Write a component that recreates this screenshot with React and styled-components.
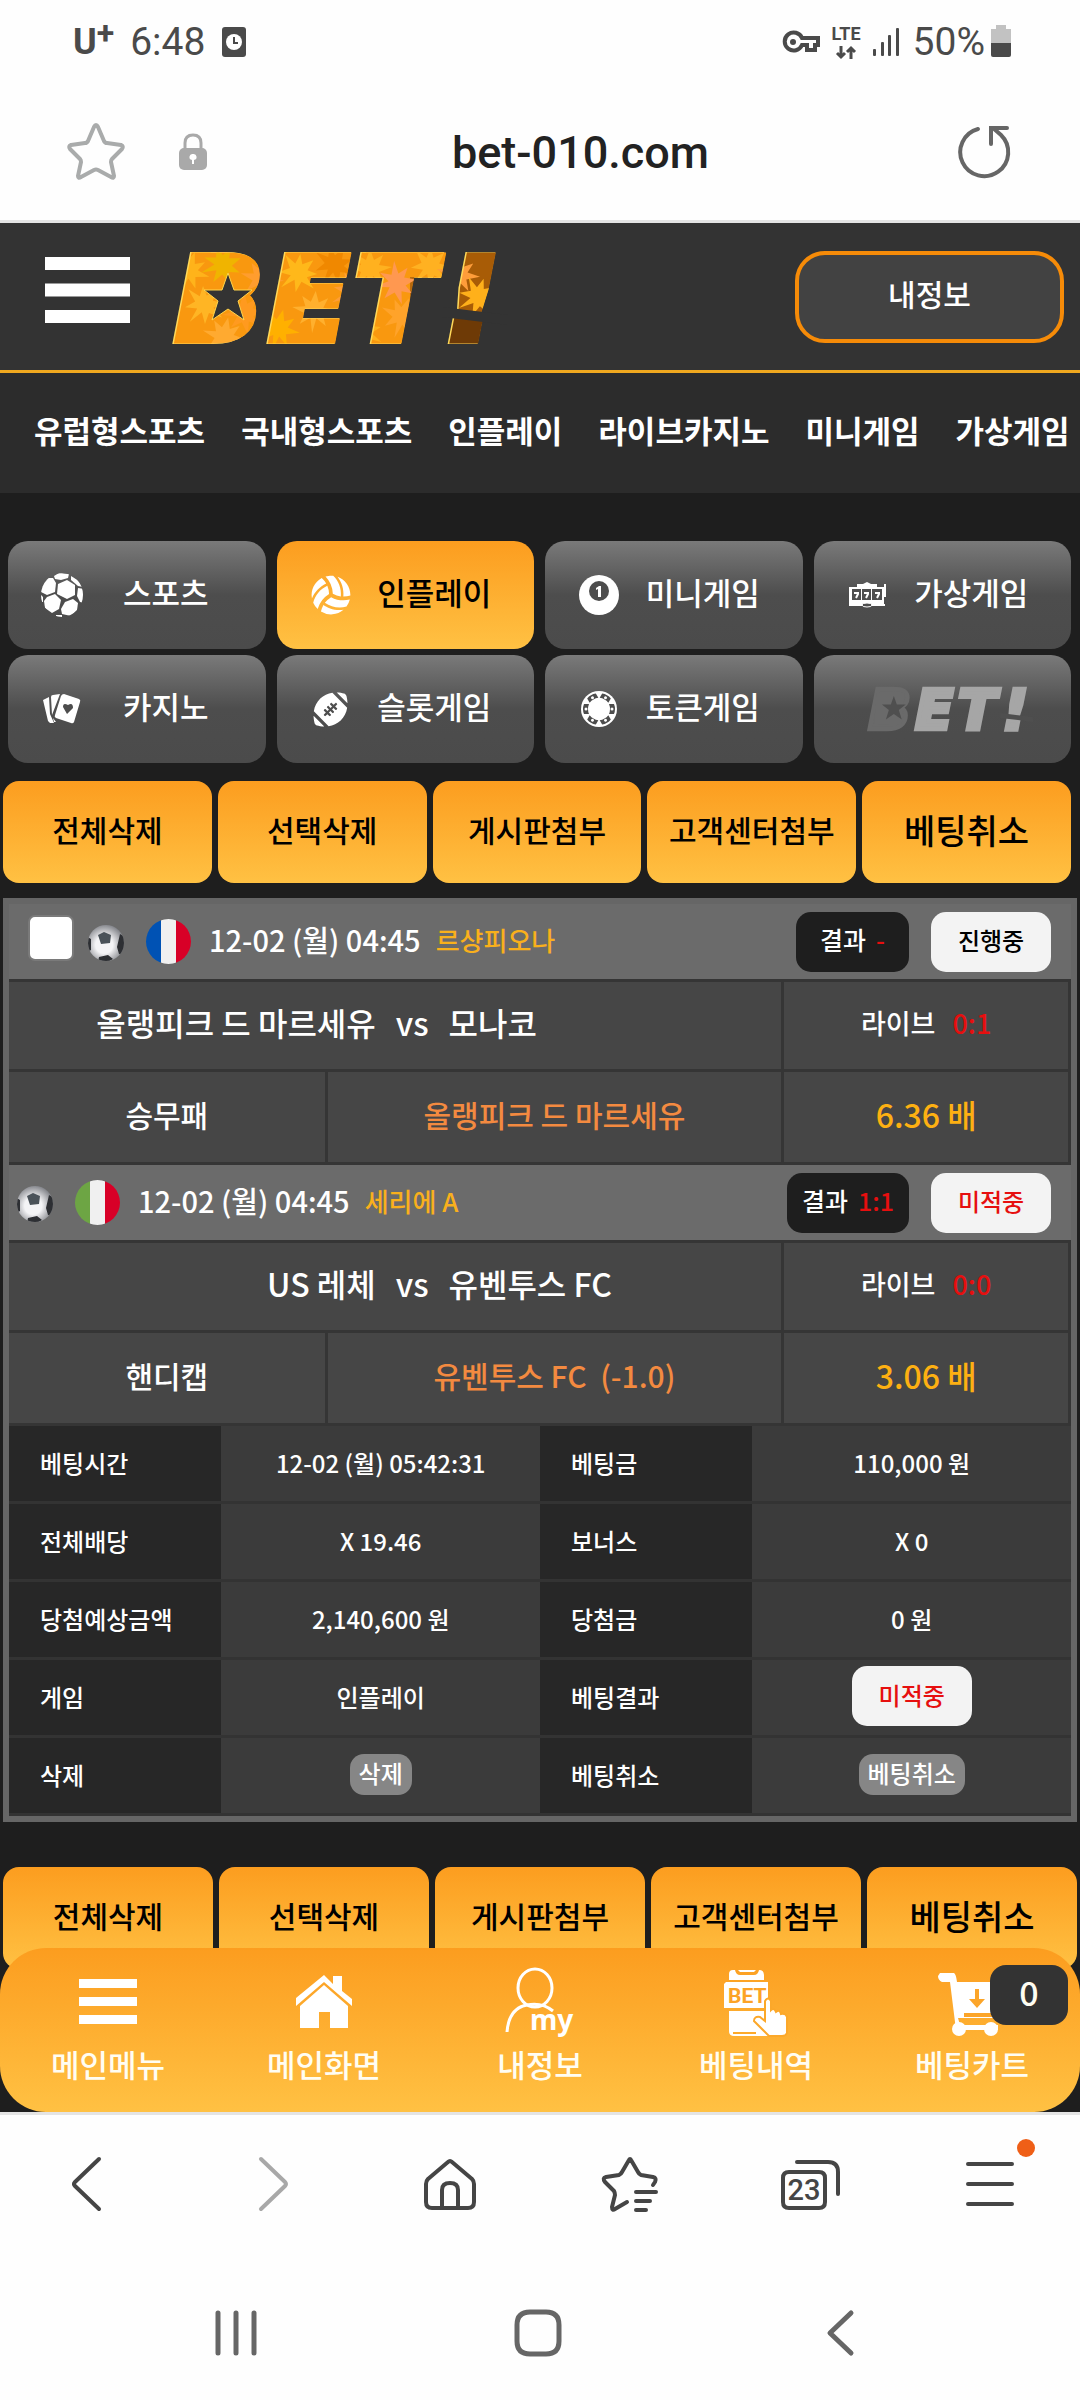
import { useState } from "react";
import styled, { createGlobalStyle, css } from "styled-components";
import { FaFootballBall, FaVolleyballBall } from "react-icons/fa";

const GlobalStyle = createGlobalStyle`
  * {
    box-sizing: border-box;
  }
  body {
    margin: 0;
    background: #fefefe;
    font-family: "Noto Sans CJK KR", "Noto Sans", sans-serif;
    font-weight: 500;
  }
  button, input {
    font: inherit;
    color: inherit;
    padding: 0;
    border: none;
    background: none;
  }
  button {
    cursor: pointer;
  }
  a {
    color: inherit;
    text-decoration: none;
  }
  svg {
    display: block;
    flex: none;
    overflow: visible;
  }
`;

const orange = "linear-gradient(#fc9d1f, #ffc143)";

/* ---------- phone status bar ---------- */

const StatusBar = styled.div`
  display: flex;
  justify-content: space-between;
  align-items: center;
  height: 84px;
  padding: 0 69px 0 73px;
  color: #4a4a4a;
  font-family: Roboto, sans-serif;
  font-weight: 400;
  font-size: 39px;
`;

const StatusGroup = styled.div`
  display: flex;
  align-items: center;
  gap: ${(props) => props.$gap};
`;

const Carrier = styled.span`
  display: flex;
  align-items: center;
  font-weight: 700;
  font-size: 36px;
  line-height: 36px;
  sup {
    font-size: 32px;
    line-height: 36px;
    padding-bottom: 18px;
  }
`;

const Network = styled.div`
  display: flex;
  flex-direction: column;
  align-items: center;
  gap: 4px;
  font-weight: 700;
  font-size: 18px;
  line-height: 16px;
`;

/* ---------- browser address bar ---------- */

const AddressBar = styled.form`
  display: flex;
  align-items: center;
  height: 139px;
  padding: 0 66px;
  border-bottom: 3px solid #e4e4e4;
`;

const BarButton = styled.button`
  margin-right: ${(props) => props.$gap || "0"};
`;

const Address = styled.input`
  flex: 1;
  min-width: 0;
  text-align: center;
  font-family: Roboto, sans-serif;
  font-weight: 500;
  font-size: 45px;
  color: #222;
  outline: none;
`;

/* ---------- site ---------- */

const Site = styled.div`
  background: #1e1e1e;
  color: #fff;
  overflow: hidden;
`;

const Header = styled.header`
  display: flex;
  align-items: center;
  height: 150px;
  padding: 0 16px 0 45px;
  background: #333;
  border-bottom: 3px solid #f0a81f;
`;

const MenuButton = styled.button`
  padding-bottom: 14px;
`;

const HeaderLogo = styled.a`
  margin: 4px auto 0 44px;
`;

const MyInfoButton = styled.button`
  width: 269px;
  height: 92px;
  padding-bottom: 8px;
  border: 4px solid #f68b08;
  border-radius: 30px;
  background: #424242;
  font-size: 30px;
  line-height: 40px;
`;

const Nav = styled.nav`
  display: flex;
  align-items: center;
  gap: 36px;
  height: 120px;
  padding: 0 0 8px 34px;
  overflow: hidden;
  white-space: nowrap;
  background: #2c2c2c;
  font-size: 31px;
  font-weight: 700;
`;

const Categories = styled.div`
  display: grid;
  grid-template-columns: repeat(4, 1fr);
  gap: 6px 11px;
  margin: 48px 9px 18px 8px;
`;

const Category = styled.button`
  display: flex;
  align-items: center;
  justify-content: center;
  height: 108px;
  padding: 0 18px 0 32px;
  border-radius: 20px;
  font-size: 31px;
  background: linear-gradient(#7a7a7a, #4d4d4d 50%, #4b4b4b);
  ${(props) =>
    props.$active &&
    css`
      color: #000;
      background: ${orange};
      svg {
        color: #fff;
      }
    `}
  > span {
    flex: 1;
    padding-bottom: 8px;
  }
`;

const IconSlot = styled.i`
  display: flex;
  width: 44px;
  justify-content: center;
`;

const Actions = styled.div`
  display: grid;
  grid-template-columns: repeat(5, 1fr);
  gap: 6px;
  padding: 0 ${(props) => props.$right} 0 3px;
`;

const Action = styled.button`
  height: 102px;
  padding-bottom: 6px;
  border-radius: 16px;
  background: ${orange};
  color: #000;
  font-size: 30px;
  white-space: nowrap;
  &:last-child {
    font-size: 34px;
  }
`;

/* ---------- bet slip ---------- */

const Slip = styled.section`
  margin: 15px 3px 45px;
  border: 6px solid #666;
  background: #353535;
`;

const MatchHeader = styled.div`
  display: flex;
  align-items: center;
  height: 78px;
  padding: 0 20px 0 6px;
  background: #6b6b6b;
  border-bottom: 3px solid #353535;
`;

const Tick = styled.input`
  appearance: none;
  width: 46px;
  height: 46px;
  margin: 0 12px 8px 13px;
  border: 2px solid #7a7a7a;
  border-radius: 7px;
  background: #fff;
`;

const Flag = styled.span`
  flex: none;
  width: 45px;
  height: 45px;
  margin: 0 18px 0 20px;
  border-radius: 50%;
  background: linear-gradient(
    90deg,
    ${(props) => props.$left} 33%,
    #f0f0f0 33% 67%,
    #d80027 67%
  );
`;

const MatchDate = styled.span`
  padding-bottom: 5px;
  font-size: 29px;
`;

const League = styled.span`
  flex: 1;
  margin-left: 15px;
  padding-bottom: 5px;
  color: #f9b01c;
  font-size: 26px;
`;

const Score = styled.span`
  color: #e60f0f;
`;

const ResultBadge = styled.span`
  display: flex;
  align-items: center;
  justify-content: center;
  gap: 10px;
  min-width: 113px;
  height: 60px;
  margin-right: 22px;
  padding: 0 15px 5px;
  border-radius: 15px;
  background: #1e1e1e;
  font-size: 25px;
`;

const StateBadge = styled.span`
  display: inline-flex;
  align-items: center;
  justify-content: center;
  width: 120px;
  height: 60px;
  padding-bottom: 4px;
  border-radius: 15px;
  background: #f3f3f3;
  color: ${(props) => (props.$lost ? "#e60f0f" : "#000")};
  font-size: 24px;
`;

const MatchTable = styled.table`
  width: 100%;
  table-layout: fixed;
  border-spacing: 0;
  td {
    height: 90px;
    padding: 0 0 7px;
    text-align: center;
    background: #464646;
    border: solid #353535;
    border-width: 0 3px 3px 0;
    font-size: 30px;
  }
  tr:last-child td {
    height: 93px;
  }
`;

const Teams = styled.div`
  display: grid;
  grid-template-columns: 1fr auto 1fr;
  gap: 20px;
  padding-left: 34px;
  font-size: 32px;
  > :first-child {
    text-align: right;
  }
  > :last-child {
    text-align: left;
  }
`;

const Live = styled.div`
  display: flex;
  justify-content: center;
  gap: 17px;
  font-size: 27px;
`;

const Pick = styled.span`
  color: #f38a40;
  white-space: pre;
`;

const Odds = styled.span`
  color: #fdb012;
  font-size: 32px;
`;

const InfoTable = styled.table`
  width: 100%;
  table-layout: fixed;
  border-spacing: 0;
  font-size: 24px;
  th,
  td {
    height: 78px;
    padding: 0 0 3px;
    font-weight: 500;
    border-bottom: 3px solid #333;
  }
  th {
    width: 20%;
    padding-left: 31px;
    text-align: left;
    background: #272727;
  }
  td {
    text-align: center;
    background: #3b3b3b;
  }
`;

const SmallButton = styled.button`
  height: 41px;
  padding: 0 9px 3px;
  border-radius: 14px;
  background: #868686;
  line-height: 36px;
`;

/* ---------- bottom tab bar of the site ---------- */

const TabBar = styled.nav`
  position: relative;
  display: grid;
  grid-template-columns: repeat(5, 1fr);
  height: 164px;
  margin-top: -21px;
  border-radius: 46px;
  background: ${orange};
`;

const Tab = styled.a`
  position: relative;
  display: flex;
  flex-direction: column;
  align-items: center;
  padding-top: 18px;
  color: #fffdf2;
  font-size: 31px;
  line-height: 44px;
  svg {
    margin-bottom: 4px;
  }
`;

const CartCount = styled.span`
  position: absolute;
  top: 17px;
  right: 12px;
  width: 78px;
  height: 60px;
  border-radius: 16px;
  background: #333;
  text-align: center;
  font-size: 34px;
  line-height: 54px;
`;

/* ---------- browser toolbar and system keys ---------- */

const Toolbar = styled.div`
  display: grid;
  grid-template-columns: repeat(6, 1fr);
  height: 141px;
  border-top: 3px solid #e4e4e4;
  color: #454545;
`;

const ToolButton = styled.button`
  position: relative;
  display: flex;
  align-items: center;
  justify-content: center;
  color: ${(props) => (props.$off ? "#a8a8a8" : "inherit")};
`;

const Dot = styled.span`
  position: absolute;
  top: 24px;
  right: 45px;
  width: 18px;
  height: 18px;
  border-radius: 50%;
  background: #ef5f17;
`;

const SystemKeys = styled(Toolbar)`
  grid-template-columns: repeat(3, 1fr);
  height: 147px;
  padding: 12px 89px 0 85px;
  border: none;
  color: #666;
`;

/* ---------- drawings ---------- */

const STAR =
  "M0 -25 L6 -8 L24 -8 L10 3 L16 22 L0 11 L-16 22 L-10 3 L-24 -8 L-6 -8 Z";

const LEAF =
  "M0 -20 L4 -9 L13 -14 L9 -4 L22 -2 L9 3 L13 14 L3 7 L0 22 L-3 7 L-13 14 L-9 3 L-22 -2 L-9 -4 L-13 -14 L-4 -9 Z";

const leaves = [
  [14, 18, 20, "#ffb31a"], [48, 12, 70, "#f0b400"], [88, 26, 10, "#ff9d2e"],
  [30, 52, 40, "#ffb524"], [70, 60, 85, "#ff9a1f"], [104, 76, 15, "#ffb000"],
  [124, 20, 50, "#ffb81a"], [140, 58, 5, "#ffb02e"], [160, 12, 30, "#f08800"],
  [178, 40, 65, "#ff9e35"], [196, 16, 0, "#ffb11f"], [188, 78, 35, "#ffb01a"],
  [222, 30, 80, "#ff9850"], [228, 64, 20, "#ffa32a"], [256, 14, 45, "#ffb121"],
  [284, 22, 10, "#ff9d3a"], [304, 44, 60, "#ffb01a"], [50, 84, 12, "#ffaa30"],
];

// heavy slab look: the outline is painted in the same fill as the letters
const letters = {
  fontFamily: '"DejaVu Sans", sans-serif',
  fontWeight: 700,
  fontStyle: "italic",
  fontSize: 112,
};

// fills the counters of the B so that the star can be cut out of it
const BACKING = "M20 14 H76 L70 76 H14 Z";

// keeps the stem and the dot of the exclamation mark apart
const SLASH = "M268 54 L334 62 V72 L268 64 Z";

const Logo = () => (
  <svg width="330" height="92" viewBox="0 0 330 92" role="img" aria-label="BET!">
    <defs>
      <pattern id="leaves" width="340" height="92" patternUnits="userSpaceOnUse">
        <rect width="340" height="92" fill="#f9980f" />
        <rect x="236" y="24" width="24" height="26" fill="#b8690c" />
        <rect x="280" width="60" height="60" fill="#a85c06" />
        {leaves.map(([x, y, r, fill]) => (
          <path
            key={x + "-" + y}
            d={LEAF}
            fill={fill}
            transform={`translate(${x} ${y}) rotate(${r})`}
          />
        ))}
        <rect x="270" y="60" width="60" height="32" fill="#6e3a06" />
      </pattern>
    </defs>
    <text x="2 96 182 272" y="86" stroke="#ffd95a" strokeWidth="10" style={letters}>
      BET!
    </text>
    <text
      x="3 97 183 273"
      y="86"
      fill="url(#leaves)"
      stroke="url(#leaves)"
      strokeWidth="9"
      style={letters}
      aria-hidden="true"
    >
      BET!
    </text>
    <path d={BACKING} fill="url(#leaves)" />
    <path d={SLASH} fill="#333" />
    <path d={STAR} fill="#333" stroke="#ffd54d" strokeWidth="1" transform="translate(54 45)" />
  </svg>
);

const MutedLogo = () => (
  <svg width="164" height="46" viewBox="0 0 330 92" role="img" aria-label="BET!">
    <text x="3 97 183 273" y="86" fill="#a6a6a6" stroke="#a6a6a6" strokeWidth="9" style={letters}>
      <tspan fill="#6a6a6a" stroke="#6a6a6a">B</tspan>ET!
    </text>
    <path d={BACKING} fill="#6a6a6a" />
    <path d={SLASH} fill="#4f4f4f" />
    <path d={STAR} fill="#4f4f4f" transform="translate(54 45)" />
  </svg>
);

const Bars = ({ width, height, bar }) => (
  <svg width={width} height={height} fill="#fff">
    <rect width={width} height={bar} />
    <rect y={(height - bar) / 2} width={width} height={bar} />
    <rect y={height - bar} width={width} height={bar} />
  </svg>
);

const SoccerIcon = () => (
  <svg width="42" height="44" viewBox="0 0 42 44" fill="#fff">
    <clipPath id="soccer">
      <ellipse cx="21" cy="22" rx="21" ry="22" />
    </clipPath>
    <g clipPath="url(#soccer)">
      <path d="M13 3 L18 0 L28 1 L27 5 L20 7 L14 6 Z" />
      <path d="M17 11 L26 7 L34 12 L34 22 L26 26 L16 21 Z" />
      <path d="M5 5 L12 5 L15 10 L14 19 L6 22 L0 19 L0 10 Z" />
      <path d="M6 24 L14 21 L20 27 L18 36 L11 40 L4 35 L3 28 Z" />
      <path d="M24 29 L32 26 L37 30 L36 37 L30 43 L21 41 L20 36 Z" />
      <path d="M37 15 L43 16 L43 30 L39 29 L36 23 Z" />
      <path d="M30 3 L38 8 L42 14 L37 13 L30 7 Z" />
      <path d="M0 22 L2 24 L2 29 L0 29 Z M15 42 L21 42 L21 44 L15 44 Z" />
    </g>
  </svg>
);

const BilliardIcon = () => (
  <svg width="42" height="42" viewBox="0 0 42 42">
    <circle cx="21" cy="21" r="20" fill="#fff" />
    <circle cx="21" cy="17" r="10" fill="#4d4d4d" />
    <path d="M18 14 L21 12 H23 V23 H20 V15 L18 16 Z" fill="#fff" />
  </svg>
);

const SlotIcon = () => (
  <svg width="38" height="26" viewBox="0 0 38 26" fill="#fff">
    <path d="M8 2 H14 L18 0 L22 2 H28 V5 H35 V22 H36 V24 H0 V5 H8 Z" />
    <path d="M3 7 H12 V18 H3 Z M13 7 H22 V18 H13 Z M23 7 H33 V18 H23 Z" fill="#4f4f4f" />
    <path
      d="M5 11 H9 V12 L7 16 M15 11 H19 V12 L17 16 M26 11 H30 V12 L28 16"
      fill="none"
      stroke="#fff"
      strokeWidth="2"
    />
    <path d="M36 2 V15" stroke="#fff" strokeWidth="2" />
    <ellipse cx="18" cy="23" rx="5" ry="2" fill="#4f4f4f" stroke="#fff" />
  </svg>
);

const CardsIcon = () => (
  <svg width="38" height="30" viewBox="0 0 38 30" fill="#fff">
    <path d="M0 6 L6 3 L7 20 L11 29 L7 29 L5 27 Z" />
    <path d="M8 3 Q8 1 10 1 L17 0 L9 21 Z M10 24 L13 28 L11 28 Z" />
    <path d="M21 0 L36 5 Q38 6 37 8 L31 28 Q30 30 28 29 L13 24 Q11 23 12 21 L18 2 Q19 0 21 0 Z" />
    <path d="M24 20 L20 13 Q20 8 25 11 Q30 8 30 14 Z" fill="#4d4d4d" />
  </svg>
);

const ChipIcon = () => (
  <svg width="36" height="36" viewBox="-18 -18 36 36">
    <circle r="18" fill="#fff" />
    {[0, 60, 120, 180, 240, 300].map((deg) => (
      <g key={deg} transform={`rotate(${deg})`}>
        <path d="M10 -5 L15 -5 Q17 0 15 5 L10 5 Q12 0 10 -5 Z" fill="#4d4d4d" />
        <circle cx="13" r="1.5" fill="#fff" />
      </g>
    ))}
  </svg>
);

const MatchBall = () => (
  <svg width="40" height="42" viewBox="0 0 40 42">
    <defs>
      <radialGradient id="ball" cx="45%" cy="55%" r="60%">
        <stop offset="0.4" stopColor="#f4f4f6" />
        <stop offset="1" stopColor="#77797f" />
      </radialGradient>
      <clipPath id="ball-edge">
        <circle cx="20" cy="22" r="18" />
      </clipPath>
    </defs>
    <circle cx="20" cy="22" r="18" fill="url(#ball)" />
    <g clipPath="url(#ball-edge)">
      <path d="M12 14 L18 11 L25 14 L24 22 L15 23 Z" fill="#4a5259" />
      <path d="M0 15 L5 18 L5 29 L0 32 Z M34 13 L42 18 L40 34 L33 33 L31 26 Z M13 36 L22 34 L27 38 L20 42 L12 41 Z" fill="#2d2f33" />
    </g>
  </svg>
);

const HomeIcon = () => (
  <svg width="72" height="72" viewBox="0 0 72 72" fill="#fff">
    <path d="M8 32 L36 9 L45 18 V10 H54 V25 L64 33 V40 L36 16 L8 40 Z" />
    <path d="M12 40 L36 19 L60 40 V62 H42 V46 H31 V62 H12 Z" />
  </svg>
);

const MyIcon = () => (
  <svg width="72" height="72" viewBox="0 0 72 72" fill="none" stroke="#fff" strokeWidth="3">
    <ellipse cx="31" cy="22" rx="17" ry="19" />
    <path d="M3 66 Q5 42 23 39 Q38 36 49 45" />
    <text
      x="26"
      y="64"
      fill="#fff"
      stroke="none"
      fontFamily="Noto Sans, sans-serif"
      fontWeight="700"
      fontSize="28"
    >
      my
    </text>
  </svg>
);

const BetIcon = () => (
  <svg width="72" height="72" viewBox="0 0 72 72" fill="#fff">
    <path d="M9 14 V8 Q9 4 13 4 H15 Q16 9 20 9 H34 Q38 9 39 4 Q44 4 44 9 V14 Z" />
    <path d="M18 4 H36 L34 6 H20 Z" />
    <path d="M6 16 H48 V33 H45 V42 H4 V18 Z" />
    <path d="M9 45 H44 V57 L54 70 H14 Q9 70 9 65 Z" />
    <path d="M13 67 H36" stroke="#fdaa2b" strokeWidth="2" />
    <text x="8" y="37" fill="#fca326" fontFamily="Roboto, sans-serif" fontWeight="700" fontSize="21">
      BET
    </text>
    <path
      d="M45 55 V35 Q48 30 51 35 V44 Q54 41 56 46 Q60 43 61 48 Q66 47 67 51 V67 Q66 70 62 70 H49 L34 55 Q34 50 40 51 Z"
      stroke="#fca82a"
      strokeWidth="2"
    />
  </svg>
);

const CartIcon = () => (
  <svg width="72" height="72" viewBox="0 0 72 72" fill="#fff">
    <path d="M4 7 H18 Q20 8 21 16 H70 L62 52 H22 L24 59 H62 V64 H20 L14 16 H6 Q2 14 2 10 Z" />
    <circle cx="23" cy="63" r="7" />
    <circle cx="55" cy="63" r="7" />
    <path d="M39 23 H43 V33 H49 L41 42 L33 33 H39 Z M28 47 H60 V51 H28 Z" fill="#fca529" />
  </svg>
);

const Line = ({ d, width = 64, stroke = 4, children }) => (
  <svg
    width={width}
    height={width}
    viewBox="0 0 64 64"
    fill="none"
    stroke="currentColor"
    strokeWidth={stroke}
    strokeLinecap="round"
    strokeLinejoin="round"
  >
    <path d={d} />
    {children}
  </svg>
);

/* ---------- data ---------- */

const menu = ["유럽형스포츠", "국내형스포츠", "인플레이", "라이브카지노", "미니게임", "가상게임"];

const categories = [
  { name: "스포츠", icon: <SoccerIcon /> },
  { name: "인플레이", icon: <FaVolleyballBall size={40} /> },
  { name: "미니게임", icon: <BilliardIcon /> },
  { name: "가상게임", icon: <SlotIcon /> },
  { name: "카지노", icon: <CardsIcon /> },
  { name: "슬롯게임", icon: <FaFootballBall size={35} /> },
  { name: "토큰게임", icon: <ChipIcon /> },
];

const actions = ["전체삭제", "선택삭제", "게시판첨부", "고객센터첨부", "베팅취소"];

const matches = [
  {
    first: true,
    flag: "#0052b4",
    date: "12-02 (월) 04:45",
    league: "르샹피오나",
    result: "-",
    state: "진행중",
    home: "올랭피크 드 마르세유",
    away: "모나코",
    live: "0:1",
    type: "승무패",
    pick: "올랭피크 드 마르세유",
    odds: "6.36 배",
  },
  {
    flag: "#6da544",
    date: "12-02 (월) 04:45",
    league: "세리에 A",
    result: "1:1",
    state: "미적중",
    lost: true,
    home: "US 레체",
    away: "유벤투스 FC",
    live: "0:0",
    type: "핸디캡",
    pick: "유벤투스 FC  (-1.0)",
    odds: "3.06 배",
  },
];

const info = [
  ["베팅시간", "12-02 (월) 05:42:31", "베팅금", "110,000 원"],
  ["전체배당", "X 19.46", "보너스", "X 0"],
  ["당첨예상금액", "2,140,600 원", "당첨금", "0 원"],
  ["게임", "인플레이", "베팅결과", <StateBadge $lost>미적중</StateBadge>],
  [
    "삭제",
    <SmallButton>삭제</SmallButton>,
    "베팅취소",
    <SmallButton>베팅취소</SmallButton>,
  ],
];

const tabs = [
  { name: "메인화면", icon: <HomeIcon /> },
  { name: "내정보", icon: <MyIcon /> },
  { name: "베팅내역", icon: <BetIcon /> },
];

const ActionRow = ({ right }) => (
  <Actions $right={right}>
    {actions.map((name) => (
      <Action key={name}>{name}</Action>
    ))}
  </Actions>
);

const Match = ({ match }) => (
  <>
    <MatchHeader>
      {match.first && <Tick type="checkbox" aria-label="베팅 선택" />}
      <MatchBall />
      <Flag $left={match.flag} />
      <MatchDate>{match.date}</MatchDate>
      <League>{match.league}</League>
      <ResultBadge>
        결과 <Score>{match.result}</Score>
      </ResultBadge>
      <StateBadge $lost={match.lost}>{match.state}</StateBadge>
    </MatchHeader>
    <MatchTable>
      <colgroup>
        <col width="30%" />
        <col width="43%" />
        <col width="27%" />
      </colgroup>
      <tbody>
        <tr>
          <td colSpan={2}>
            <Teams>
              <span>{match.home}</span>
              <span>vs</span>
              <span>{match.away}</span>
            </Teams>
          </td>
          <td>
            <Live>
              라이브 <Score>{match.live}</Score>
            </Live>
          </td>
        </tr>
        <tr>
          <td>{match.type}</td>
          <td>
            <Pick>{match.pick}</Pick>
          </td>
          <td>
            <Odds>{match.odds}</Odds>
          </td>
        </tr>
      </tbody>
    </MatchTable>
  </>
);

const App = () => {
  const [active, setActive] = useState("인플레이");
  const [url, setUrl] = useState("bet-010.com");

  return (
    <>
      <GlobalStyle />
      <StatusBar>
        <StatusGroup $gap="16px">
          <Carrier>
            U<sup>+</sup>
          </Carrier>
          <span>6:48</span>
          <svg width="26" height="30" viewBox="0 0 26 30">
            <rect x="1" width="24" height="30" rx="3" fill="#4a4a4a" />
            <circle cx="13" cy="15" r="8" fill="#fff" />
            <path d="M13 10 V16 H17" fill="none" stroke="#4a4a4a" strokeWidth="2" />
          </svg>
        </StatusGroup>
        <StatusGroup $gap="12px">
          <svg width="38" height="24" viewBox="0 0 38 24" fill="none" stroke="#4a4a4a">
            <path
              d="M20 8 H36 V15 H33 V20 H25 V15 H20 A9 9 0 1 1 20 8 Z"
              strokeWidth="4"
            />
            <circle cx="11" cy="12" r="3" fill="#4a4a4a" stroke="none" />
          </svg>
          <Network>
            LTE
            <svg width="22" height="13" viewBox="0 0 22 13" fill="none" stroke="#4a4a4a" strokeWidth="3">
              <path d="M6 0 V11 M2 7 L6 11 L10 7 M16 13 V2 M12 6 L16 2 L20 6" />
            </svg>
          </Network>
          <svg width="28" height="30" viewBox="0 0 28 30" fill="#4a4a4a">
            <rect y="22" width="3" height="7" rx="1" />
            <rect x="8" y="15" width="3" height="14" rx="1" />
            <rect x="15" y="8" width="3" height="21" rx="1" />
            <rect x="23" y="1" width="3" height="28" rx="1" />
          </svg>
          <StatusGroup $gap="6px">
            50%
            <svg width="20" height="34" viewBox="0 0 20 34">
              <path d="M5 0 H15 V4 H20 V18 H0 V4 H5 Z" fill="#c2c2c2" />
              <path d="M0 18 H20 V30 Q20 32 18 32 H2 Q0 32 0 30 Z" fill="#4a4a4a" />
            </svg>
          </StatusGroup>
        </StatusGroup>
      </StatusBar>

      <AddressBar onSubmit={(event) => event.preventDefault()}>
        <BarButton type="button" $gap="53px" aria-label="북마크 추가">
          <svg width="60" height="60" viewBox="0 0 60 60" fill="none" stroke="#a9abab" strokeWidth="4" strokeLinejoin="round">
            <path d="M30 3 Q31 3 32 5 L38 19 Q39 21 41 21 L55 23 Q58 24 56 27 L46 37 Q45 38 45 40 L48 54 Q48 57 45 55 L32 48 Q30 47 28 48 L15 55 Q12 57 12 54 L15 40 Q15 38 14 37 L4 27 Q2 24 5 23 L19 21 Q21 21 22 19 L28 5 Q29 3 30 3 Z" />
          </svg>
        </BarButton>
        <svg width="28" height="38" viewBox="0 0 28 38">
          <path d="M6 16 V10 Q6 2 14 2 Q22 2 22 10 V16" fill="none" stroke="#a9a9a9" strokeWidth="3" />
          <rect y="15" width="28" height="22" rx="5" fill="#a9a9a9" />
          <path d="M14 21 A3 3 0 0 1 15 27 V31 H13 V27 A3 3 0 0 1 14 21 Z" fill="#fff" />
        </svg>
        <Address
          aria-label="주소"
          value={url}
          onChange={(event) => setUrl(event.target.value)}
        />
        <BarButton type="submit" aria-label="새로고침">
          <svg width="60" height="60" viewBox="0 0 60 60" fill="none" stroke="#666" strokeWidth="4" strokeLinecap="round">
            <path d="M24 7 A24 24 0 1 0 47 13 L39 6" />
            <path d="M37 22 V6 H53" />
          </svg>
        </BarButton>
      </AddressBar>

      <Site>
        <Header>
          <MenuButton aria-label="메뉴">
            <Bars width={85} height={66} bar={13} />
          </MenuButton>
          <HeaderLogo href="#">
            <Logo />
          </HeaderLogo>
          <MyInfoButton>내정보</MyInfoButton>
        </Header>
        <Nav>
          {menu.map((name) => (
            <a key={name} href="#">
              {name}
            </a>
          ))}
        </Nav>

        <Categories>
          {categories.map(({ name, icon }) => (
            <Category
              key={name}
              $active={active === name}
              onClick={() => setActive(name)}
            >
              <IconSlot>{icon}</IconSlot>
              <span>{name}</span>
            </Category>
          ))}
          <Category aria-label="BET!">
            <MutedLogo />
          </Category>
        </Categories>

        <ActionRow right="9px" />
        <Slip>
          {matches.map((match) => (
            <Match key={match.league} match={match} />
          ))}
          <InfoTable>
            <tbody>
              {info.map(([label, value, label2, value2]) => (
                <tr key={label}>
                  <th scope="row">{label}</th>
                  <td>{value}</td>
                  <th scope="row">{label2}</th>
                  <td>{value2}</td>
                </tr>
              ))}
            </tbody>
          </InfoTable>
        </Slip>
        <ActionRow right="3px" />

        <TabBar>
          <Tab href="#">
            <svg width="58" height="72" viewBox="0 0 58 72" fill="#fff">
              <path d="M0 13 H58 V22 H0 Z M0 31 H58 V40 H0 Z M0 49 H58 V58 H0 Z" />
            </svg>
            메인메뉴
          </Tab>
          {tabs.map(({ name, icon }) => (
            <Tab key={name} href="#">
              {icon}
              {name}
            </Tab>
          ))}
          <Tab href="#">
            <CartIcon />
            베팅카트
            <CartCount>0</CartCount>
          </Tab>
        </TabBar>
      </Site>

      <Toolbar>
        <ToolButton aria-label="뒤로">
          <Line d="M41 7 L17 30 Q15 32 17 34 L41 57" />
        </ToolButton>
        <ToolButton $off aria-label="앞으로">
          <Line d="M23 7 L47 30 Q49 32 47 34 L23 57" />
        </ToolButton>
        <ToolButton aria-label="홈">
          <Line d="M30 10 Q32 8 34 10 L54 27 Q56 29 56 32 V50 Q56 56 50 56 H14 Q8 56 8 50 V32 Q8 29 10 27 Z M24 56 V38 Q24 31 32 31 Q40 31 40 38 V56" />
        </ToolButton>
        <ToolButton aria-label="북마크">
          <Line d="M55 33 L57 30 Q59 26 55 25 L43 23 Q41 22 40 20 L33 8 Q32 6 31 8 L24 20 Q23 22 21 23 L8 25 Q4 26 7 30 L16 39 Q17 41 17 43 L14 55 Q14 59 17 57 L29 50 M38 40 H58 M38 49 H52 M38 58 H48" />
        </ToolButton>
        <ToolButton aria-label="탭">
          <Line d="M11 20 H41 Q47 20 47 26 V50 Q47 56 41 56 H11 Q5 56 5 50 V26 Q5 20 11 20 Z M19 10 H50 Q60 10 60 20 V42">
            <text
              x="26"
              y="48"
              textAnchor="middle"
              fill="currentColor"
              stroke="none"
              fontFamily="Roboto, sans-serif"
              fontWeight="500"
              fontSize="29"
            >
              23
            </text>
          </Line>
        </ToolButton>
        <ToolButton aria-label="더보기">
          <Line d="M10 12 H54 M10 32 H54 M10 52 H54" />
          <Dot />
        </ToolButton>
      </Toolbar>
      <SystemKeys>
        <ToolButton aria-label="최근 앱">
          <Line d="M14 12 V52 M32 12 V52 M50 12 V52" stroke={5} />
        </ToolButton>
        <ToolButton aria-label="홈 화면">
          <Line d="M24 11 H40 Q53 11 53 24 V40 Q53 53 40 53 H24 Q11 53 11 40 V24 Q11 11 24 11 Z" stroke={5} />
        </ToolButton>
        <ToolButton aria-label="이전">
          <Line d="M43 12 L22 32 L43 52" stroke={5} />
        </ToolButton>
      </SystemKeys>
    </>
  );
};

export default App;
